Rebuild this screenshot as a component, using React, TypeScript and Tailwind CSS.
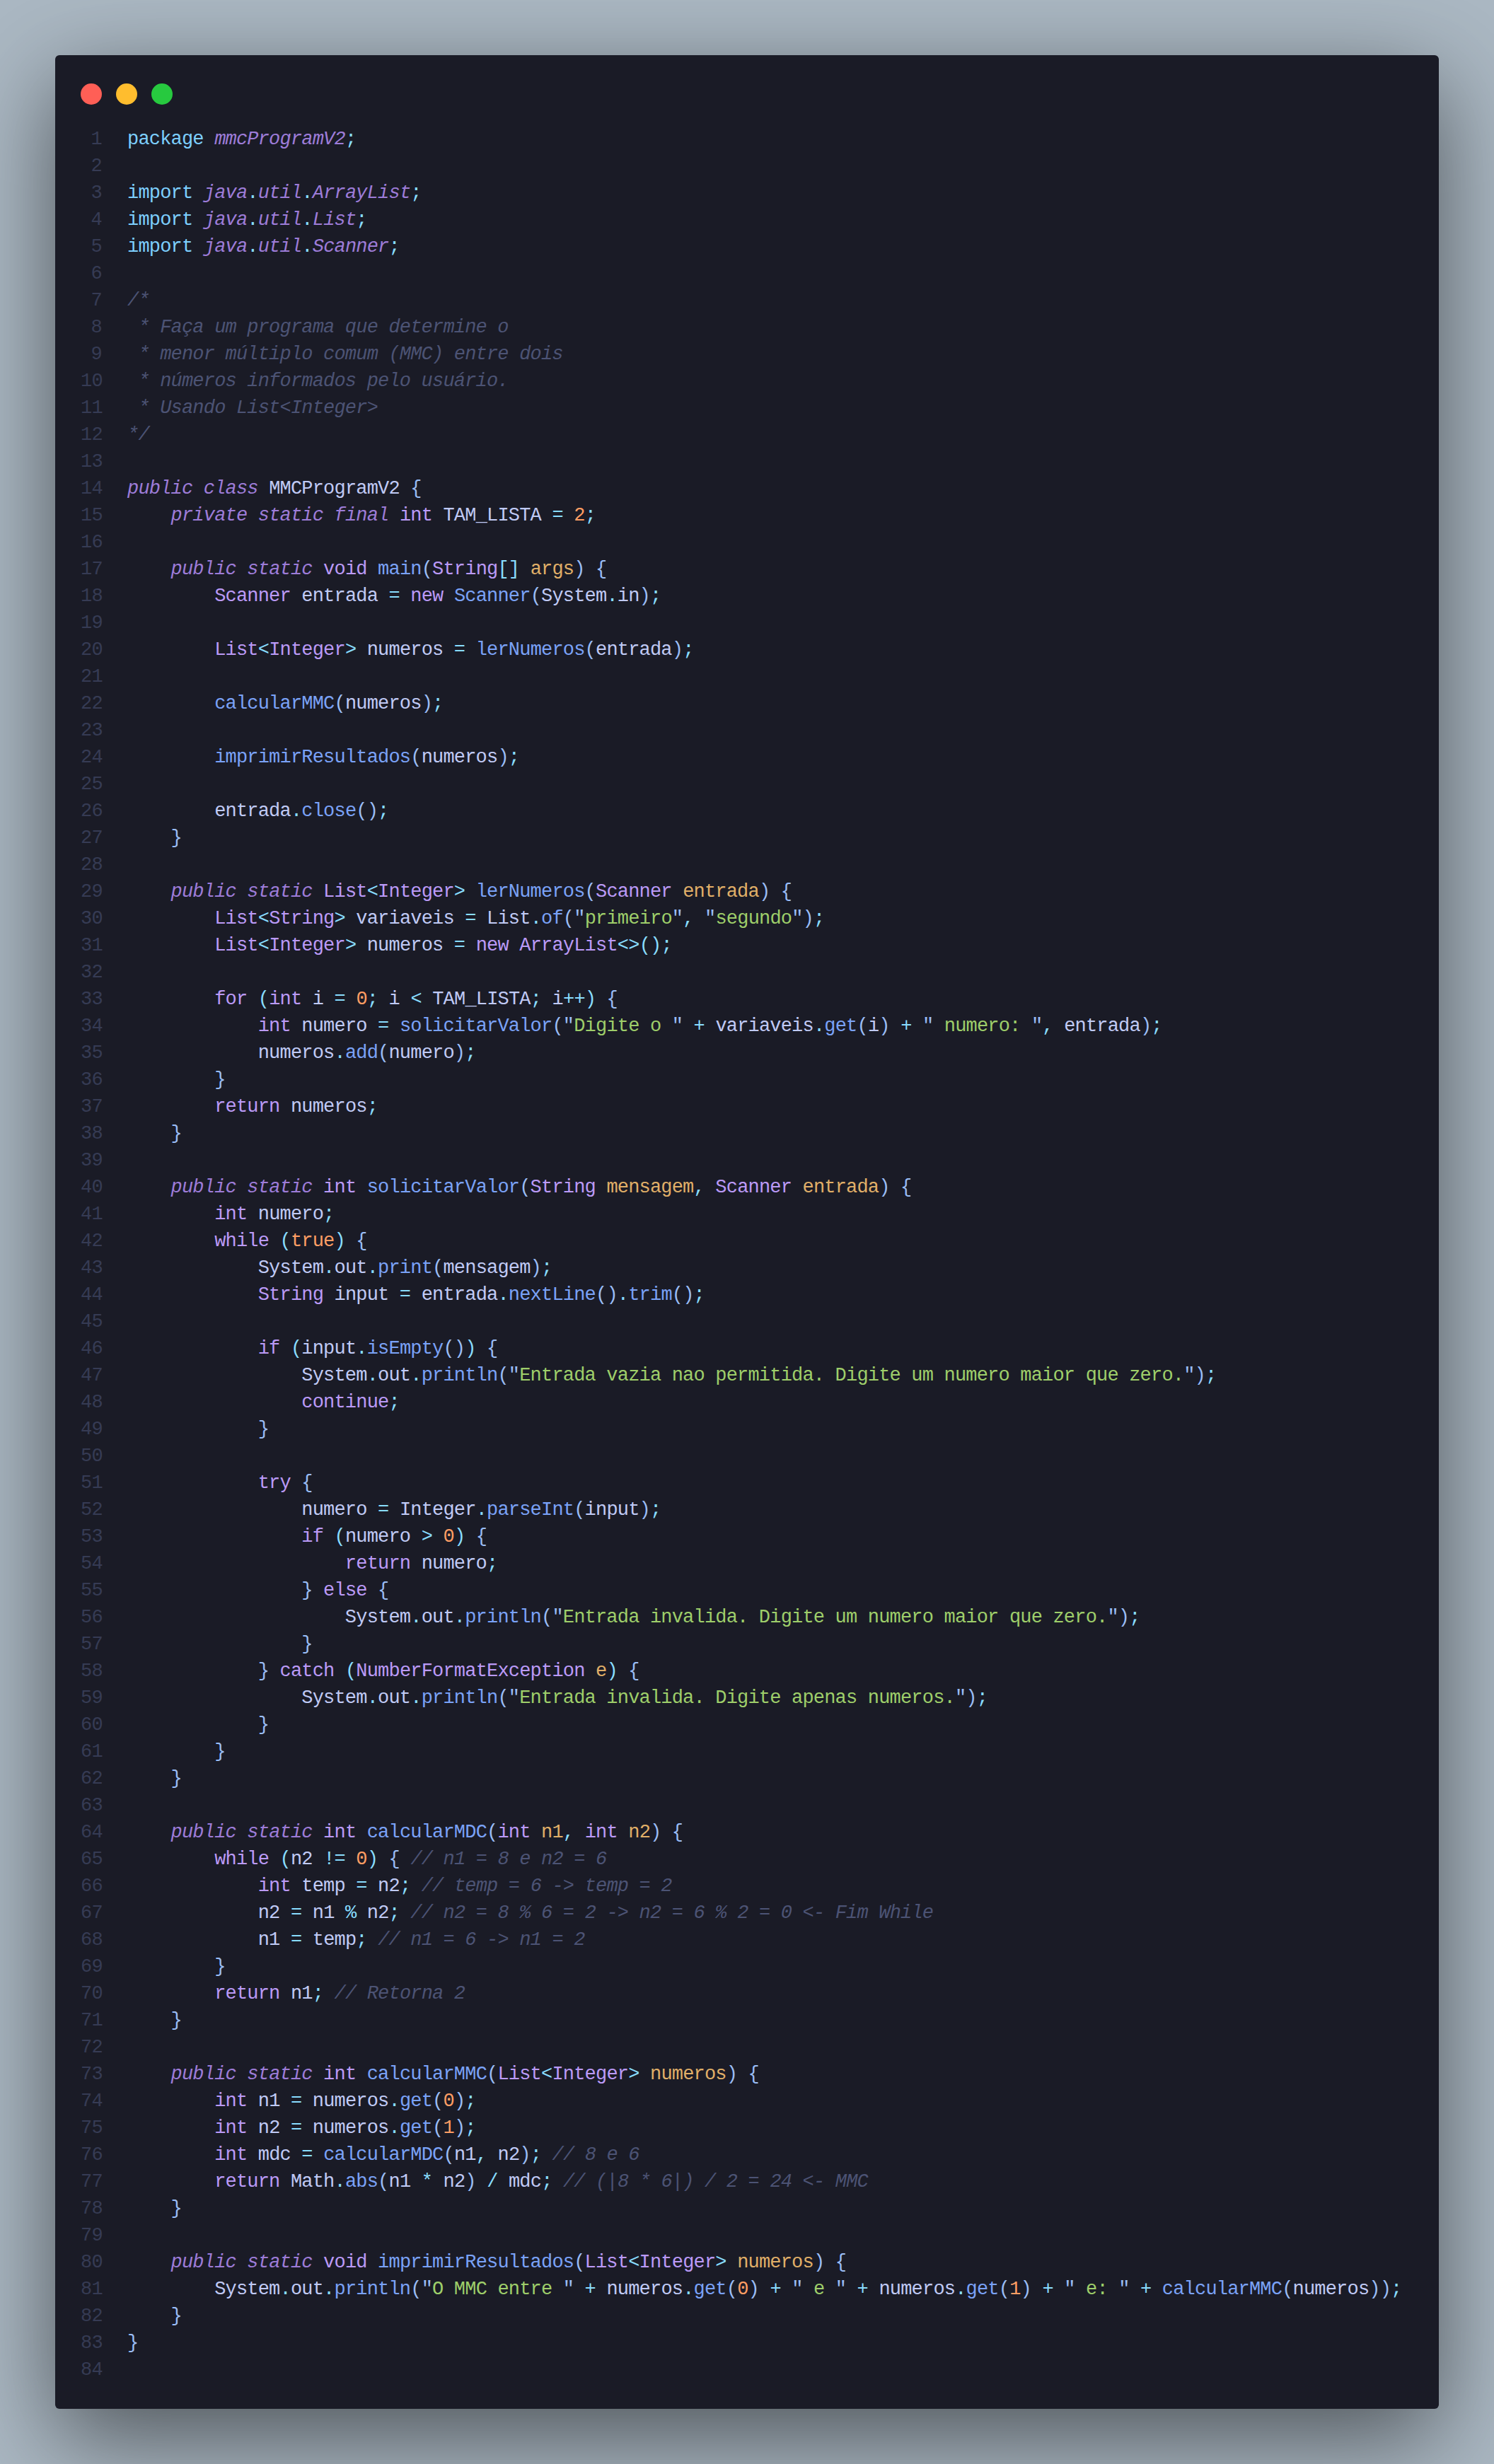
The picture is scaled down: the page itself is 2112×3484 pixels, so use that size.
import React from "react";

const code = `package mmcProgramV2;

import java.util.ArrayList;
import java.util.List;
import java.util.Scanner;

/*
 * Faça um programa que determine o
 * menor múltiplo comum (MMC) entre dois
 * números informados pelo usuário.
 * Usando List<Integer>
*/

public class MMCProgramV2 {
    private static final int TAM_LISTA = 2;

    public static void main(String[] args) {
        Scanner entrada = new Scanner(System.in);

        List<Integer> numeros = lerNumeros(entrada);

        calcularMMC(numeros);

        imprimirResultados(numeros);

        entrada.close();
    }

    public static List<Integer> lerNumeros(Scanner entrada) {
        List<String> variaveis = List.of("primeiro", "segundo");
        List<Integer> numeros = new ArrayList<>();

        for (int i = 0; i < TAM_LISTA; i++) {
            int numero = solicitarValor("Digite o " + variaveis.get(i) + " numero: ", entrada);
            numeros.add(numero);
        }
        return numeros;
    }

    public static int solicitarValor(String mensagem, Scanner entrada) {
        int numero;
        while (true) {
            System.out.print(mensagem);
            String input = entrada.nextLine().trim();

            if (input.isEmpty()) {
                System.out.println("Entrada vazia nao permitida. Digite um numero maior que zero.");
                continue;
            }

            try {
                numero = Integer.parseInt(input);
                if (numero > 0) {
                    return numero;
                } else {
                    System.out.println("Entrada invalida. Digite um numero maior que zero.");
                }
            } catch (NumberFormatException e) {
                System.out.println("Entrada invalida. Digite apenas numeros.");
            }
        }
    }

    public static int calcularMDC(int n1, int n2) {
        while (n2 != 0) { // n1 = 8 e n2 = 6
            int temp = n2; // temp = 6 -> temp = 2
            n2 = n1 % n2; // n2 = 8 % 6 = 2 -> n2 = 6 % 2 = 0 <- Fim While
            n1 = temp; // n1 = 6 -> n1 = 2
        }
        return n1; // Retorna 2
    }

    public static int calcularMMC(List<Integer> numeros) {
        int n1 = numeros.get(0);
        int n2 = numeros.get(1);
        int mdc = calcularMDC(n1, n2); // 8 e 6
        return Math.abs(n1 * n2) / mdc; // (|8 * 6|) / 2 = 24 <- MMC
    }

    public static void imprimirResultados(List<Integer> numeros) {
        System.out.println("O MMC entre " + numeros.get(0) + " e " + numeros.get(1) + " e: " + calcularMMC(numeros));
    }
}
`;

const colors = {
  text: "text-[#c0caf5]",
  cyan: "text-[#7dcfff]",
  op: "text-[#89ddff]",
  paren: "text-[#9abdf5]",
  kw: "text-[#bb9af7]",
  storage: "italic text-[#9d7cd8]",
  fn: "text-[#7aa2f7]",
  str: "text-[#9ece6a]",
  num: "text-[#ff9e64]",
  param: "text-[#e0af68]",
  comment: "italic text-[#4c5374]",
};

type Kind = keyof typeof colors;
type Token = { s: string; k: Kind };

const storage = ["public", "private", "static", "final", "class"];
const keywords = ["int", "void", "new", "for", "while", "if", "else", "try", "catch", "return", "continue", "String", "List", "Integer", "Scanner", "ArrayList", "NumberFormatException"];

const tokenize = (line: string, lineNo: number): Token[] => {
  if (lineNo >= 7 && lineNo <= 12) return [{ s: line, k: "comment" }];

  const head = line.match(/^(package|import) ([^;]+)(;)$/);
  if (head) {
    const path = head[2].split(/(\.)/).map((s): Token => ({ s, k: s === "." ? "op" : "storage" }));
    return [{ s: head[1], k: "cyan" }, { s: " ", k: "text" }, ...path, { s: ";", k: "op" }];
  }

  const isDecl = /^\s+public static .*\(/.test(line);
  const isControl = /^\s*(\} catch|while|for|if) ?\(|^\s*\} catch/.test(line);
  const tokens: Token[] = [];
  const re = /\/\/.*$|"[^"]*"|[A-Za-z_][A-Za-z0-9_]*|\d+|\s+|./g;
  let depth = 0;
  let m: RegExpExecArray | null;

  while ((m = re.exec(line))) {
    const s = m[0];
    const rest = line.slice(m.index + s.length);
    let k: Kind = "text";
    if (s.startsWith("//")) k = "comment";
    else if (s.startsWith('"')) {
      tokens.push({ s: '"', k: "paren" }, { s: s.slice(1, -1), k: "str" }, { s: '"', k: "paren" });
      continue;
    } else if (/^[A-Za-z_]/.test(s)) {
      if (storage.includes(s)) k = "storage";
      else if (s === "true") k = "num";
      else if (rest.startsWith("(")) k = "fn";
      else if (rest.startsWith(".")) k = "text";
      else if (keywords.includes(s)) k = "kw";
      else if ((isDecl && depth > 0) || (isControl && s === "e")) k = "param";
    } else if (/^\d/.test(s)) k = "num";
    else if (s === "(") {
      k = isControl && depth === 0 ? "op" : rest.startsWith(");") && line.includes("<>") ? "op" : "paren";
      depth++;
    } else if (s === ")") {
      depth--;
      k = isControl && depth === 0 ? "op" : line.includes("<>") ? "op" : "paren";
    } else if (s === "{" || s === "}") k = "paren";
    else if (/\S/.test(s)) k = "op";
    tokens.push({ s, k });
  }
  return tokens;
};

const App = () => {
  const lines = code.split("\n");

  return (
    <div className="min-h-[3484px] bg-[#abb8c3] p-[78px]">
      <div className="h-[3328px] rounded-[6px] bg-[#1a1b26] pl-[36px] pt-[40px] shadow-[0_40px_136px_rgba(0,0,0,0.55)]">
        {/* window buttons */}
        <div className="mb-[30px] flex gap-[20px]">
          <div className="h-[30px] w-[30px] rounded-full bg-[#ff5f56]"></div>
          <div className="h-[30px] w-[30px] rounded-full bg-[#ffbd2e]"></div>
          <div className="h-[30px] w-[30px] rounded-full bg-[#27c93f]"></div>
        </div>
        {/* code */}
        <div className="flex flex-col font-['Liberation_Mono',monospace] text-[27px] leading-[38px] tracking-[-0.81px]">
          {lines.map((line, index) => (
            <div className="flex h-[38px] gap-[36px]" key={index}>
              <div className="w-[30px] shrink-0 text-right text-[#363b54]">{index + 1}</div>
              <div className="whitespace-pre">
                {tokenize(line, index + 1).map((t, i) => (
                  <span className={colors[t.k]} key={i}>
                    {t.s}
                  </span>
                ))}
              </div>
            </div>
          ))}
        </div>
      </div>
    </div>
  );
};

export default App;
